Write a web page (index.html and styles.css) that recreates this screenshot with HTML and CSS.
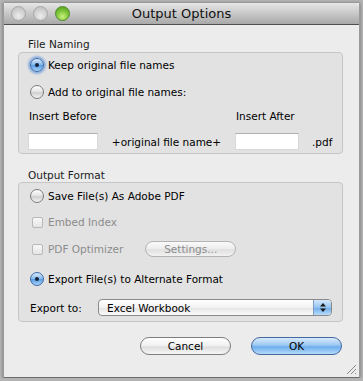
FILE: index.html
```html
<!DOCTYPE html>
<html>
<head>
    <title>Output Options</title>
    <link rel="stylesheet" href="styles.css">
</head>
<body>
    <div class="window">
        <div class="titlebar">
            <div class="lights">
                <span class="light"></span>
                <span class="light"></span>
                <span class="light green"></span>
            </div>
            <div class="title">Output Options</div>
        </div>

        <div class="content">
            <div class="group-label">File Naming</div>
            <div class="group naming">
                <div class="row first">
                    <span class="radio on focus"></span>
                    <span class="label">Keep original file names</span>
                </div>
                <div class="row second">
                    <span class="radio"></span>
                    <span class="label">Add to original file names:</span>
                </div>
                <div class="name-grid">
                    <span class="small-label">Insert Before</span>
                    <span></span>
                    <span class="small-label">Insert After</span>
                    <span></span>
                    <input type="text" class="field">
                    <span class="middle">+original file name+</span>
                    <input type="text" class="field">
                    <span class="ext">.pdf</span>
                </div>
            </div>

            <div class="group-label second-label">Output Format</div>
            <div class="group format">
                <div class="row save">
                    <span class="radio"></span>
                    <span class="label">Save File(s) As Adobe PDF</span>
                </div>
                <div class="row embed">
                    <span class="check"></span>
                    <span class="label dim">Embed Index</span>
                </div>
                <div class="row optimizer">
                    <span class="check"></span>
                    <span class="label dim">PDF Optimizer</span>
                    <button type="button" class="settings">Settings...</button>
                </div>
                <div class="row export">
                    <span class="radio on"></span>
                    <span class="label">Export File(s) to Alternate Format</span>
                </div>
                <div class="row export-to">
                    <span class="label export-label">Export to:</span>
                    <div class="select">
                        <span class="select-text">Excel Workbook</span>
                        <span class="stepper">
                            <svg width="8" height="11" viewBox="0 0 8 11">
                                <path d="M4 1 L7 4.5 L1 4.5 Z" fill="#1a1a1a"/>
                                <path d="M4 10 L7 6.5 L1 6.5 Z" fill="#1a1a1a"/>
                            </svg>
                        </span>
                    </div>
                </div>
            </div>

            <div class="buttons">
                <button type="button" class="push">Cancel</button>
                <button type="button" class="push default">OK</button>
            </div>
        </div>

        <svg class="grip" width="11" height="11" viewBox="0 0 11 11">
            <path d="M1 10 L10 1 M5 10 L10 5 M9 10 L10 9" stroke="#8a8a8a" stroke-width="1"/>
        </svg>
    </div>
</body>
</html>
```

FILE: styles.css
```css
html {
    background-color: #b4b4b4;
}

body {
    margin: 0;
    padding: 3px 0 0 3px;
    font-family: "DejaVu Sans", sans-serif;
    font-size: 10.5px;
    color: #000;
    white-space: nowrap;
}

.window {
    position: relative;
    width: 357px;
    height: 375px;
    background-color: #ececec;
    box-sizing: border-box;
    border-left: 1px solid #9a9a9a;
    border-right: 1px solid #9a9a9a;
    border-bottom: 1px solid #6a6a6a;
    box-shadow: 0 0 3px rgba(0,0,0,0.4);
}

.titlebar {
    height: 21px;
    background: linear-gradient(#e6e6e6, #a9a9a9);
    border-bottom: 1px solid #505050;
    border-top-left-radius: 4px;
    border-top-right-radius: 4px;
    display: flex;
    align-items: center;
    position: relative;
}

.lights {
    display: flex;
    gap: 7px;
    padding-left: 7px;
}

.light {
    width: 13px;
    height: 13px;
    border-radius: 50%;
    border: 1px solid #a8a8a8;
    background: radial-gradient(circle at 50% 70%, #ececec, #cdcdcd 60%, #bdbdbd);
}

.light.green {
    border-color: #4f8a25;
    background: radial-gradient(circle at 50% 75%, #c8f27a, #78c036 55%, #4f9a1c);
}

.title {
    position: absolute;
    left: 0;
    right: 0;
    text-align: center;
    font-size: 13px;
    color: #111;
    top: 3px;
}

.content {
    padding: 12px 16px 0 14px;
}

.group-label {
    height: 14px;
    line-height: 14px;
    margin-left: 10px;
    margin-bottom: 1px;
    color: #1a1a1a;
}

.second-label {
    margin-top: 14px;
    margin-bottom: 0;
}

.group {
    background-color: #e2e2e2;
    border: 1px solid #c6c6c6;
    border-radius: 4px;
    padding: 0 10px 3px 10px;
}

.row {
    display: flex;
    align-items: center;
    height: 16px;
}

.row.first { margin-top: 4px; }
.row.second { margin-top: 11px; }
.row.save { margin-top: 5px; }
.row.embed { margin-top: 10px; }
.row.optimizer { margin-top: 11px; }
.row.export { margin-top: 14px; }
.row.export-to { margin-top: 12px; height: 17px; }

.format {
    padding-bottom: 5px;
}

.radio {
    width: 14px;
    height: 14px;
    box-sizing: border-box;
    border-radius: 50%;
    border: 1px solid #7c7c7c;
    background: linear-gradient(#ffffff, #e2e2e2 50%, #cfcfcf 55%, #f4f4f4);
    margin-left: 1px;
    margin-right: 4px;
    position: relative;
}

.radio.on {
    border-color: #3d6aa8;
    background: linear-gradient(#d8eafc, #8cbcec 45%, #5c9ee4 55%, #a6d3f8);
}

.radio.on::after {
    content: "";
    position: absolute;
    left: 4px;
    top: 4px;
    width: 4px;
    height: 4px;
    border-radius: 50%;
    background-color: #15223a;
}

.radio.focus {
    box-shadow: 0 0 2px 2px rgba(80,140,220,0.6);
}

.check {
    width: 11px;
    height: 11px;
    box-sizing: border-box;
    border: 1px solid #b8b8b8;
    border-radius: 2px;
    background: linear-gradient(#f8f8f8, #e4e4e4);
    margin-left: 3px;
    margin-right: 5px;
}

.label.dim {
    color: #8c8c8c;
}

.name-grid {
    display: grid;
    grid-template-columns: 70px 137px 64px 1fr;
    grid-template-rows: 16px 17px;
    row-gap: 9px;
    margin-top: 8px;
    align-items: center;
    margin-left: -1px;
}

.small-label {
    padding-left: 1px;
}

.field {
    height: 17px;
    box-sizing: border-box;
    border: 1px solid #d8d8d8;
    border-top-color: #b0b0b0;
    background-color: #fff;
    margin: 0;
    padding: 0;
    width: 100%;
}

.middle {
    text-align: center;
}

.ext {
    padding-left: 13px;
}

.settings {
    margin-left: 22px;
    width: 91px;
    height: 16px;
    padding: 0;
    border: 1px solid #b4b4b4;
    border-radius: 8px;
    background: linear-gradient(#fafafa, #ececec 50%, #e0e0e0 55%, #f2f2f2);
    font-family: "DejaVu Sans", sans-serif;
    font-size: 10.5px;
    color: #8c8c8c;
}

.export-label {
    width: 68px;
    padding-left: 1px;
}

.select {
    flex: 1;
    height: 17px;
    box-sizing: border-box;
    border: 1px solid #8a8a8a;
    border-radius: 4px;
    background: linear-gradient(#ffffff, #f2f2f2 50%, #e6e6e6 55%, #fbfbfb);
    display: flex;
    align-items: center;
    overflow: hidden;
}

.select-text {
    flex: 1;
    padding-left: 8px;
}

.stepper {
    width: 17px;
    height: 100%;
    border-left: 1px solid #7d9cc8;
    background: linear-gradient(#d4e8fc, #96c4f0 50%, #74b0ec 55%, #b8dcfa);
    display: flex;
    align-items: center;
    justify-content: center;
}

.buttons {
    display: flex;
    justify-content: flex-end;
    gap: 20px;
    margin-top: 15px;
    padding-right: 1px;
}

.push {
    width: 91px;
    height: 18px;
    padding: 0;
    border: 1px solid #7e7e7e;
    border-radius: 9px;
    background: linear-gradient(#ffffff, #f0f0f0 50%, #dedede 55%, #f6f6f6);
    font-family: "DejaVu Sans", sans-serif;
    font-size: 10.5px;
    color: #000;
}

.push.default {
    border-color: #45689e;
    background: linear-gradient(#d8eafc, #9cc8f2 45%, #6eaeec 55%, #b4dafa);
}

.grip {
    position: absolute;
    right: 2px;
    bottom: 2px;
}
```
